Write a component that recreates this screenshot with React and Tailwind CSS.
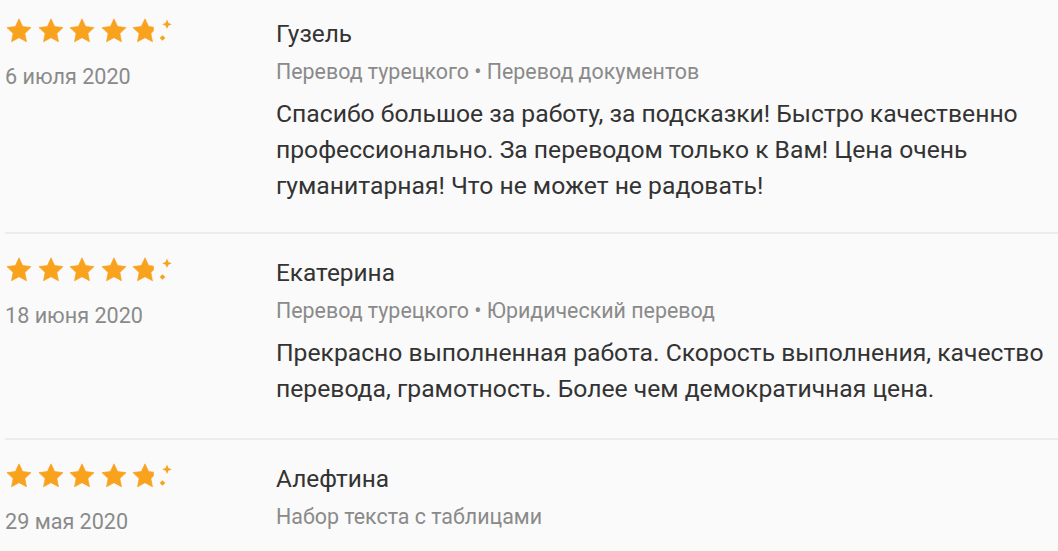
const reviews = [
    {
        name: "Гузель",
        date: "6 июля 2020",
        tags: ["Перевод турецкого", "Перевод документов"],
        text: "Спасибо большое за работу, за подсказки! Быстро качественно профессионально. За переводом только к Вам! Цена очень гуманитарная! Что не может не радовать!",
    },
    {
        name: "Екатерина",
        date: "18 июня 2020",
        tags: ["Перевод турецкого", "Юридический перевод"],
        text: "Прекрасно выполненная работа. Скорость выполнения, качество перевода, грамотность. Более чем демократичная цена.",
    },
    {
        name: "Алефтина",
        date: "29 мая 2020",
        tags: ["Набор текста с таблицами"],
        text: "",
    },
]

const STAR = "M12 1.6l3.1 6.6 7.2.9-5.3 5 1.4 7.1L12 17.7l-6.4 3.5 1.4-7.1-5.3-5 7.2-.9z"

const Star = () => <svg width="28" height="28" viewBox="0 0 24 24" className="shrink-0">
    <path d={STAR} fill="#f9a21d" stroke="#f9a21d" strokeWidth="0.6" strokeLinejoin="round" />
</svg>

const Rating = () => <div className="flex items-center gap-[3.5px] h-[28px] -mt-[3px]">
    <Star />
    <Star />
    <Star />
    <Star />
    <svg width="46" height="28" viewBox="0 0 46 28" className="shrink-0">
        <defs>
            <clipPath id="half">
                <rect x="0" y="0" width="19.5" height="24" />
            </clipPath>
        </defs>
        <g transform="scale(1.1667)">
            <path d={STAR} fill="#f9a21d" stroke="#f9a21d" strokeWidth="0.6" strokeLinejoin="round" clipPath="url(#half)" />
        </g>
        <path d="M36 2.5l1.4 3.4 3.4 1.4-3.4 1.4L36 12.1l-1.4-3.4-3.4-1.4 3.4-1.4z" fill="#f9a21d" />
        <rect x="29.5" y="19" width="4" height="4" fill="#f9a21d" transform="rotate(45 31.5 21)" />
    </svg>
</div>

const Review = ({ item, first }) => <div className={`flex ${first ? "pt-[20px] pb-[28px]" : "border-t-2 border-[#ececec] pt-[25px] pb-[31px]"}`}>
    <div className="w-[271px] shrink-0">
        <Rating />
        <div className="mt-[18px] text-[21.6px] leading-[28px] text-[#8a8a8a]">{item.date}</div>
    </div>
    <div className="grow pr-2">
        <div className="text-[24.4px] leading-[28px] text-[#333]">{item.name}</div>
        <div className="mt-[10px] text-[21.4px] leading-[28px] text-[#8a8a8a] whitespace-nowrap">{item.tags.join(" • ")}</div>
        {item.text && <p className="mt-[10px] text-[24.7px] leading-[36px] text-[#333]">{item.text}</p>}
    </div>
</div>

export default () => {
    return <div className="min-h-screen bg-[#fafafa] pl-[5px] overflow-hidden" style={{ fontFamily: "Roboto, 'Noto Sans', sans-serif" }}>
        {reviews.map((item, i) => <Review key={i} item={item} first={i === 0} />)}
    </div>
}
